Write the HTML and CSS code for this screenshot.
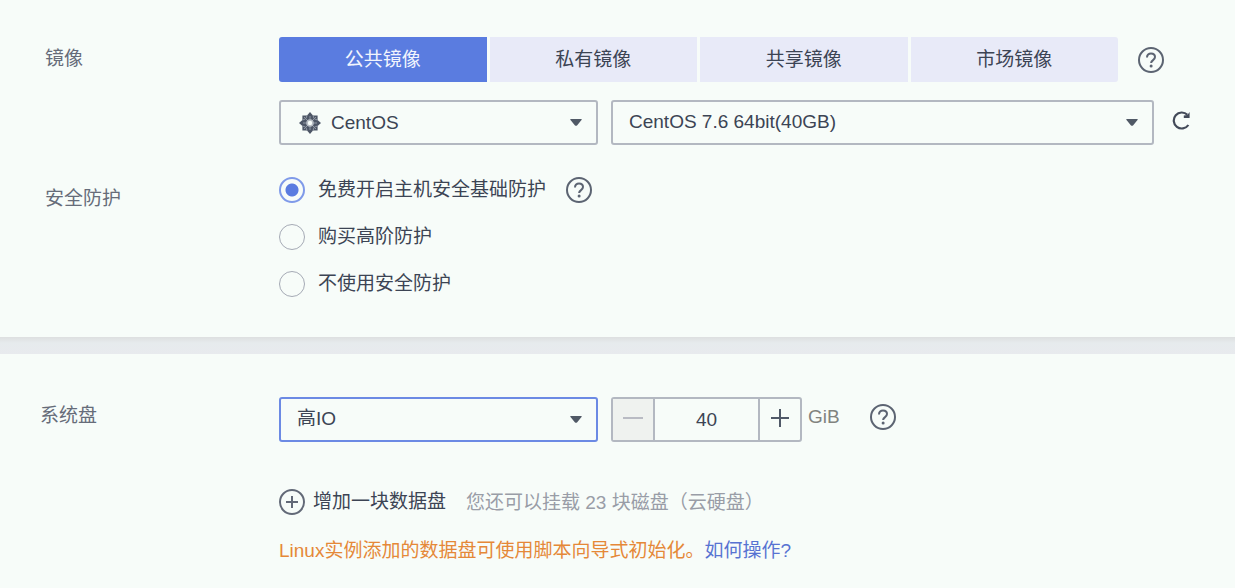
FILE: index.html
```
<!DOCTYPE html>
<html lang="zh-CN">
<head>
    <meta charset="UTF-8">
    <meta name="viewport" content="width=device-width, initial-scale=1.0">
    <title>云服务器配置</title>
    <link rel="stylesheet" href="styles.css">
</head>
<body>
    <svg class="sprite" aria-hidden="true">
        <symbol id="icon-help" viewBox="0 0 26 26">
            <circle cx="13" cy="13" r="12" fill="none" stroke="currentColor" stroke-width="2"/>
            <path d="M9 10.4C9 8 10.7 6.6 13 6.6s4 1.4 4 3.5c0 3-3.9 3-3.9 6" fill="none" stroke="currentColor" stroke-width="2"/>
            <circle cx="13.1" cy="19" r="1.5" fill="currentColor"/>
        </symbol>
        <symbol id="icon-arrow" viewBox="0 0 12 7">
            <path d="M.8 0h10.4q1 .2.3 1L7 6.4q-1 .9-2 0L.5 1Q-.2.2.8 0z" fill="currentColor"/>
        </symbol>
    </svg>

    <form>
        <section class="panel">
            <div class="row" role="group" aria-labelledby="imageLabel">
                <span class="row-label" id="imageLabel">镜像</span>
                <div class="row-content">
                    <div class="image-types">
                        <div class="tabs">
                            <button type="button" class="tab active">公共镜像</button>
                            <button type="button" class="tab">私有镜像</button>
                            <button type="button" class="tab">共享镜像</button>
                            <button type="button" class="tab">市场镜像</button>
                        </div>
                        <button type="button" class="icon-button" aria-label="镜像帮助">
                            <svg class="icon"><use href="#icon-help"/></svg>
                        </button>
                    </div>
                    <div class="image-selects">
                        <div class="select-box select-os">
                            <svg class="os-icon" viewBox="0 0 22 22" aria-hidden="true">
                                <path d="M11 0l3 3.4h4.6V8L22 11l-3.4 3v4.6H14L11 22l-3-3.4H3.4V14L0 11l3.4-3V3.4H8z" fill="#4d5666"/>
                                <path d="M11 4v14M4 11h14M5 5l12 12M17 5L5 17" stroke="#8f97a3" stroke-width="1"/>
                                <path d="M8 3.4l-1 3M14 3.4l1 3M8 18.6l-1-3M14 18.6l1-3M3.4 8l3-1M3.4 14l3 1M18.6 8l-3-1M18.6 14l-3 1" stroke="#8e96a2" stroke-width="1"/>
                                <circle cx="11" cy="11" r="3.8" fill="#b5bbc2"/>
                                <circle cx="11" cy="11" r="2.2" fill="#f7fcf9"/>
                            </svg>
                            <select aria-label="操作系统">
                                <option>CentOS</option>
                            </select>
                            <svg class="arrow" aria-hidden="true"><use href="#icon-arrow"/></svg>
                        </div>
                        <div class="select-box select-version">
                            <select aria-label="镜像版本">
                                <option>CentOS 7.6 64bit(40GB)</option>
                            </select>
                            <svg class="arrow" aria-hidden="true"><use href="#icon-arrow"/></svg>
                        </div>
                        <button type="button" class="icon-button refresh" aria-label="刷新">
                            <svg class="icon-refresh" viewBox="0 0 18 20">
                                <path d="M16.4 15A8 8 0 1 1 15.4 4.8" fill="none" stroke="currentColor" stroke-width="2.2"/>
                                <path d="M17.6 2v6h-5.8V5.6l3.6-.6z" fill="currentColor"/>
                            </svg>
                        </button>
                    </div>
                </div>
            </div>

            <div class="row row-security" role="radiogroup" aria-labelledby="securityLabel">
                <span class="row-label" id="securityLabel">安全防护</span>
                <div class="row-content radios">
                    <div class="radio-line">
                        <label class="radio"><input type="radio" name="security" checked>免费开启主机安全基础防护</label>
                        <button type="button" class="icon-button" aria-label="安全防护帮助">
                            <svg class="icon"><use href="#icon-help"/></svg>
                        </button>
                    </div>
                    <div class="radio-line">
                        <label class="radio"><input type="radio" name="security">购买高阶防护</label>
                    </div>
                    <div class="radio-line">
                        <label class="radio"><input type="radio" name="security">不使用安全防护</label>
                    </div>
                </div>
            </div>
        </section>

        <section class="panel panel-disk">
            <div class="row">
                <label class="row-label" for="diskType">系统盘</label>
                <div class="row-content">
                    <div class="disk">
                        <div class="select-box select-disk">
                            <select id="diskType">
                                <option>高IO</option>
                            </select>
                            <svg class="arrow" aria-hidden="true"><use href="#icon-arrow"/></svg>
                        </div>
                        <div class="stepper">
                            <button type="button" aria-label="减少" disabled>
                                <svg viewBox="0 0 20 20"><path d="M0 10h20" stroke="currentColor" stroke-width="2"/></svg>
                            </button>
                            <input type="text" id="diskSize" value="40" inputmode="numeric">
                            <button type="button" aria-label="增加">
                                <svg viewBox="0 0 20 20"><path d="M1 10h18M10 1v18" stroke="currentColor" stroke-width="2"/></svg>
                            </button>
                        </div>
                        <div class="disk-info">
                            <label for="diskSize">GiB</label>
                            <button type="button" class="icon-button" aria-label="系统盘帮助">
                                <svg class="icon"><use href="#icon-help"/></svg>
                            </button>
                        </div>
                    </div>
                    <div class="add-disk">
                        <button type="button" class="add-button">
                            <svg class="icon" viewBox="0 0 26 26">
                                <circle cx="13" cy="13" r="12" fill="none" stroke="currentColor" stroke-width="2"/>
                                <path d="M7 13h12M13 7v12" stroke="currentColor" stroke-width="2"/>
                            </svg>
                            增加一块数据盘
                        </button>
                        <span class="hint">您还可以挂载 23 块磁盘（云硬盘）</span>
                    </div>
                    <p class="notice">Linux实例添加的数据盘可使用脚本向导式初始化。<a href="#">如何操作?</a></p>
                </div>
            </div>
        </section>
    </form>
</body>
</html>
```
FILE: styles.css
```
:root {
    --primary-color: #5a7ce0;
    --text-color: #3c4454;
    --label-color: #666c79;
    --border-color: #b3b8c1;
    --panel-color: #f7fcf9;
}

* {
    margin: 0;
    padding: 0;
    box-sizing: border-box;
}

body {
    font-family: "Liberation Sans", "Noto Sans CJK SC", sans-serif;
    font-size: 19px;
    line-height: 26px;
    background-color: var(--panel-color);
    color: var(--text-color);
}

button, input, select {
    font: inherit;
    color: inherit;
}

button {
    border: none;
    background: none;
    cursor: pointer;
}

.sprite {
    display: none;
}

.panel {
    padding: 37px 45px 40px;
}

.panel-disk {
    padding: 0 45px 24px 40px;
}

/* grey strip between the two panels */
.panel-disk::before {
    content: "";
    display: block;
    height: 17px;
    margin: 0 -45px 43px -40px;
    background: linear-gradient(#dddfe0, #e6ebed 6px, #e8eaee);
}

.row {
    display: flex;
}

.row-security {
    margin-top: 32px;
}

.row-label {
    flex: 0 0 234px;
    padding-top: 9px;
    color: var(--label-color);
}

.panel-disk .row-label {
    flex-basis: 239px;
    padding-top: 6px;
}

.row-content {
    flex: 1;
    min-width: 0;
}

.image-types {
    display: flex;
    align-items: center;
    gap: 20px;
    padding-right: 26px;
}

.tabs {
    flex: 1;
    display: grid;
    grid-template-columns: repeat(4, 1fr);
    gap: 3px;
    border-radius: 3px;
    overflow: hidden;
}

.tab {
    height: 45px;
    background-color: #e8eaf8;
}

.tab.active {
    background-color: var(--primary-color);
    color: #f1f4fd;
}

.icon-button {
    display: flex;
    color: #5c6472;
}

.icon {
    display: block;
    width: 26px;
    height: 26px;
}

.image-selects {
    display: flex;
    align-items: center;
    margin-top: 18px;
}

.select-box {
    position: relative;
    height: 45px;
}

.select-box select {
    width: 100%;
    height: 100%;
    padding: 0 36px 2px 16px;
    appearance: none;
    border: 2px solid var(--border-color);
    border-radius: 3px;
    background: none;
}

.select-os,
.select-disk {
    flex: 0 0 319px;
    margin-right: 13px;
}

.select-os select {
    padding: 0 36px 0 50px;
}

.select-disk select {
    border-color: #6c8ae4;
}

.select-version {
    flex: 1;
}

.arrow {
    position: absolute;
    top: 19px;
    right: 16px;
    width: 12px;
    height: 7px;
    color: #505966;
    pointer-events: none;
}

.os-icon {
    position: absolute;
    top: 12px;
    left: 20px;
    width: 22px;
    height: 22px;
    pointer-events: none;
}

.refresh {
    margin-left: 18px;
    padding-bottom: 6px;
    color: #434a59;
}

.icon-refresh {
    width: 18px;
    height: 20px;
}

.radios {
    display: flex;
    flex-direction: column;
    gap: 21px;
}

.radio-line {
    display: flex;
    align-items: center;
    gap: 20px;
}

.radio {
    display: flex;
    align-items: center;
    gap: 13px;
}

.radio input {
    width: 26px;
    height: 26px;
    appearance: none;
    border: 1px solid #a5aab5;
    border-radius: 50%;
}

.radio input:checked {
    border: 2px solid #7f9ae9;
    background: radial-gradient(circle, var(--primary-color) 6px, transparent 7px);
}

.disk {
    display: flex;
    align-items: center;
}

.stepper {
    display: flex;
    width: 191px;
    height: 45px;
    border: 2px solid var(--border-color);
    border-radius: 3px;
}

.stepper button {
    flex: 0 0 40px;
    display: flex;
    align-items: center;
    justify-content: center;
    padding-bottom: 4px;
    color: #505968;
}

.stepper button:disabled {
    background-color: #eff2ef;
    color: #b9bbc3;
    cursor: default;
}

.stepper svg {
    width: 20px;
    height: 20px;
}

.stepper input {
    flex: 1;
    min-width: 0;
    border: solid var(--border-color);
    border-width: 0 2px;
    background: none;
    text-align: center;
}

.disk-info {
    display: flex;
    align-items: center;
    gap: 30px;
    padding: 0 0 5px 6px;
    color: #81837f;
}

.add-disk {
    display: flex;
    align-items: center;
    gap: 20px;
    margin-top: 46px;
}

.add-button {
    display: flex;
    align-items: center;
    gap: 8px;
}

.add-button .icon {
    color: #626977;
}

.hint {
    padding-top: 2px;
    color: #999da7;
}

.notice {
    margin-top: 22px;
    color: #e58838;
}

.notice a {
    color: #5873d2;
    text-decoration: none;
}
```
